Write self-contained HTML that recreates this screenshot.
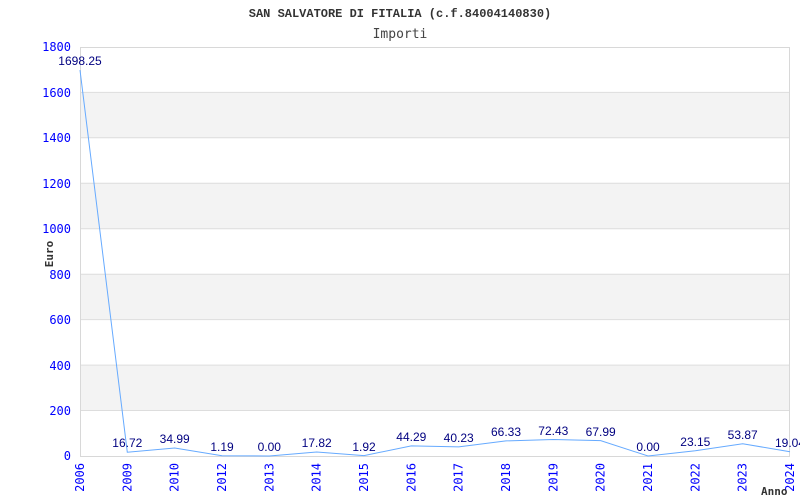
<!DOCTYPE html>
<html><head><meta charset="utf-8"><style>html,body{margin:0;padding:0;background:#fff}svg{display:block}</style></head><body>
<svg width="800" height="500" xmlns="http://www.w3.org/2000/svg">
<rect width="800" height="500" fill="#fff"/>
<text x="400" y="17" text-anchor="middle" font-family="Liberation Mono, monospace" font-size="12" font-weight="bold" fill="#333">SAN SALVATORE DI FITALIA (c.f.84004140830)</text>
<text x="400" y="38" text-anchor="middle" font-family="DejaVu Sans Mono, monospace" font-size="13" fill="#444">Importi</text>
<g fill="#f3f3f3">
<rect x="80" y="92.4" width="710" height="45.4"/>
<rect x="80" y="183.3" width="710" height="45.4"/>
<rect x="80" y="274.2" width="710" height="45.4"/>
<rect x="80" y="365.1" width="710" height="45.4"/>
</g>
<g stroke="#ddd" stroke-width="1">
<line x1="80" y1="92.4" x2="790" y2="92.4"/><line x1="80" y1="137.8" x2="790" y2="137.8"/>
<line x1="80" y1="183.3" x2="790" y2="183.3"/><line x1="80" y1="228.7" x2="790" y2="228.7"/>
<line x1="80" y1="274.2" x2="790" y2="274.2"/><line x1="80" y1="319.6" x2="790" y2="319.6"/>
<line x1="80" y1="365.1" x2="790" y2="365.1"/><line x1="80" y1="410.5" x2="790" y2="410.5"/>
</g>
<rect x="80.5" y="47.5" width="709" height="409" fill="none" stroke="#d8d8d8"/>
<g font-family="DejaVu Sans Mono, monospace" font-size="12" fill="#0000ff" text-anchor="end">
<text x="71" y="51">1800</text><text x="71" y="97">1600</text><text x="71" y="142">1400</text>
<text x="71" y="188">1200</text><text x="71" y="233">1000</text><text x="71" y="279">800</text>
<text x="71" y="324">600</text><text x="71" y="370">400</text><text x="71" y="415">200</text><text x="71" y="460">0</text>
</g>
<text transform="translate(53,254) rotate(-90)" text-anchor="middle" font-family="DejaVu Sans Mono, monospace" font-size="11" font-weight="bold" fill="#333">Euro</text>
<polyline fill="none" stroke="#66aaff" stroke-width="1" points="80,70.1 127.3,452.2 174.7,448 222,455.7 269.3,456 316.7,452 364,455.6 411.3,445.9 458.7,446.9 506,440.9 553.3,439.5 600.7,440.6 648,456 695.3,450.7 742.7,443.8 790,451.7"/>
<g font-family="Liberation Sans, sans-serif" font-size="12" fill="#000080" text-anchor="middle">
<text x="80" y="65">1698.25</text><text x="127.3" y="447">16.72</text><text x="174.7" y="443">34.99</text>
<text x="222" y="451">1.19</text><text x="269.3" y="451">0.00</text><text x="316.7" y="447">17.82</text>
<text x="364" y="451">1.92</text><text x="411.3" y="441">44.29</text><text x="458.7" y="442">40.23</text>
<text x="506" y="436">66.33</text><text x="553.3" y="435">72.43</text><text x="600.7" y="436">67.99</text>
<text x="648" y="451">0.00</text><text x="695.3" y="446">23.15</text><text x="742.7" y="439">53.87</text>
<text x="790" y="447">19.04</text>
</g>
<g font-family="DejaVu Sans Mono, monospace" font-size="12" fill="#0000ff" text-anchor="end">
<text transform="translate(84,463) rotate(-90)">2006</text><text transform="translate(131.3,463) rotate(-90)">2009</text>
<text transform="translate(178.7,463) rotate(-90)">2010</text><text transform="translate(226,463) rotate(-90)">2012</text>
<text transform="translate(273.3,463) rotate(-90)">2013</text><text transform="translate(320.7,463) rotate(-90)">2014</text>
<text transform="translate(368,463) rotate(-90)">2015</text><text transform="translate(415.3,463) rotate(-90)">2016</text>
<text transform="translate(462.7,463) rotate(-90)">2017</text><text transform="translate(510,463) rotate(-90)">2018</text>
<text transform="translate(557.3,463) rotate(-90)">2019</text><text transform="translate(604.7,463) rotate(-90)">2020</text>
<text transform="translate(652,463) rotate(-90)">2021</text><text transform="translate(699.3,463) rotate(-90)">2022</text>
<text transform="translate(746.7,463) rotate(-90)">2023</text><text transform="translate(794,463) rotate(-90)">2024</text>
</g>
<text x="761" y="495" font-family="DejaVu Sans Mono, monospace" font-size="11" font-weight="bold" fill="#333">Anno</text>
</svg>
</body></html>
